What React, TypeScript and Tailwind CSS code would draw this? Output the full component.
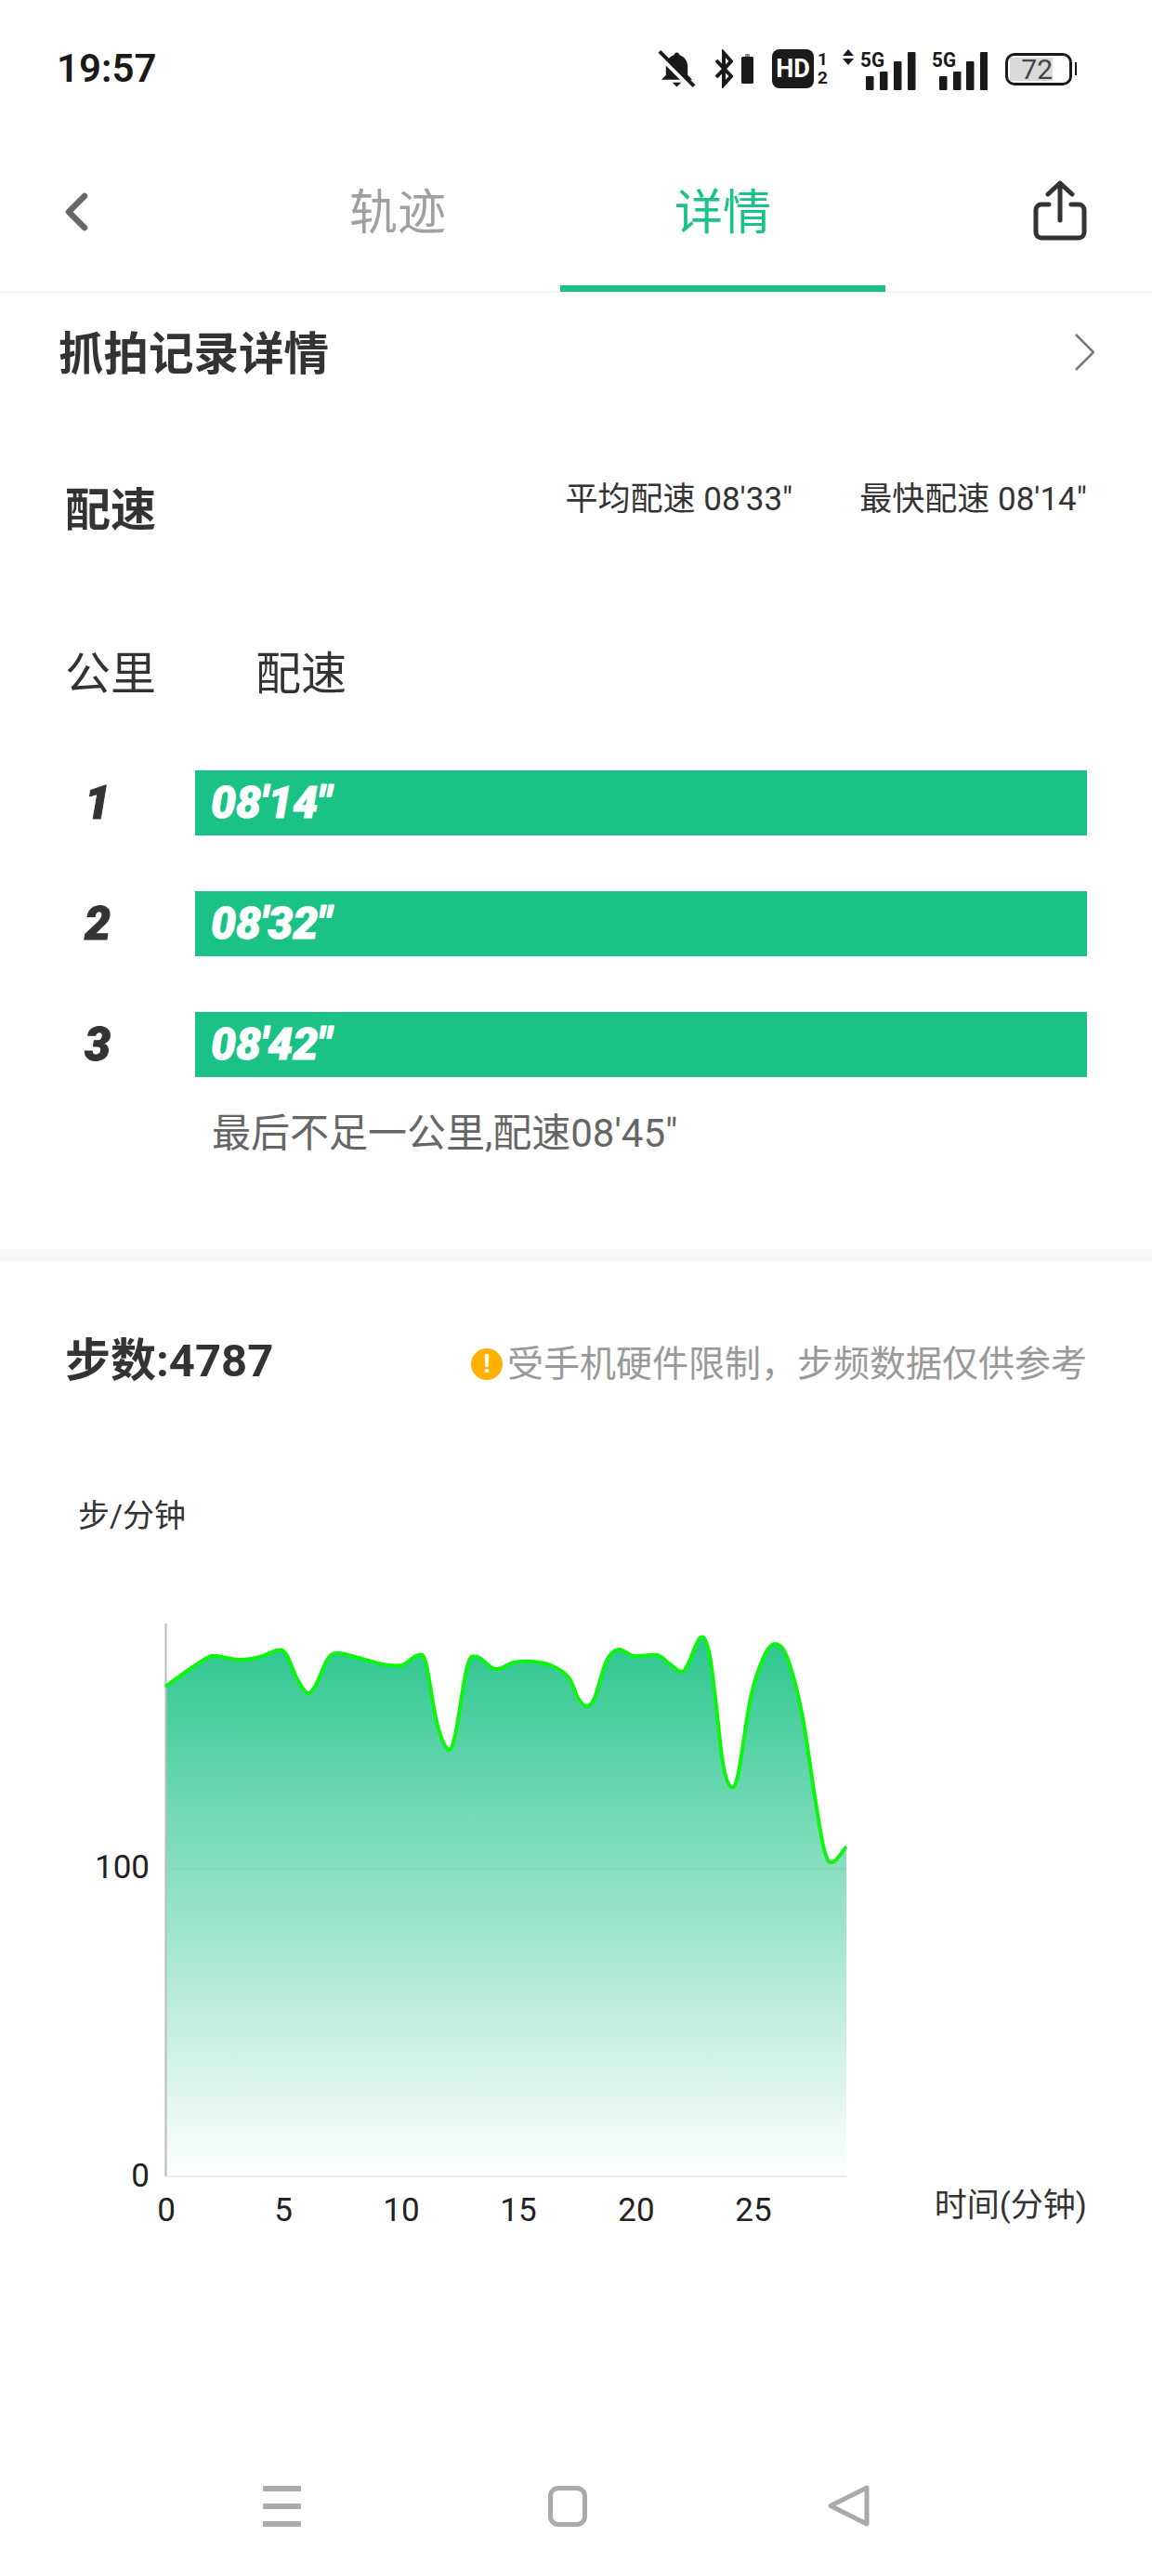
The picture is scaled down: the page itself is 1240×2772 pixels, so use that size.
import React from "react";

const pts: [number, number][] = [
  [178,1815],[203,1797],[223,1784],[233,1782],[257,1786],[280,1783],[298,1776],[308,1780],[320,1807],[331,1822],[340,1813],[353,1785],[365,1779],[393,1786],[413,1791],[433,1792],[448,1782],[458,1788],[470,1853],[482,1882],[490,1867],[503,1793],[514,1783],[533,1796],[553,1789],[573,1788],[593,1792],[612,1805],[622,1827],[631,1836],[640,1827],[653,1787],[666,1775],[682,1782],[707,1781],[720,1790],[733,1799],[740,1792],[754,1762],[763,1777],[770,1827],[778,1897],[787,1923],[795,1907],[808,1827],[822,1783],[834,1769],[847,1783],[863,1843],[877,1933],[887,1990],[896,2004],[911,1987],
];

function smooth(p: [number, number][]) {
  let d = `M${p[0][0]} ${p[0][1]}`;
  for (let i = 0; i < p.length - 1; i++) {
    const a = p[Math.max(i - 1, 0)];
    const b = p[i];
    const c = p[i + 1];
    const e = p[Math.min(i + 2, p.length - 1)];
    const c1x = b[0] + (c[0] - a[0]) / 6;
    const c1y = b[1] + (c[1] - a[1]) / 6;
    const c2x = c[0] - (e[0] - b[0]) / 6;
    const c2y = c[1] - (e[1] - b[1]) / 6;
    d += `C${c1x} ${c1y} ${c2x} ${c2y} ${c[0]} ${c[1]}`;
  }
  return d;
}

const line = smooth(pts);

function Cell({ bars }: { bars: number[] }) {
  const hs = [15, 20, 31, 41];
  return (
    <div className="h-[42px]">
      <svg width="60" height="48" viewBox="0 -6 60 48" className="block mt-[-6px]">
        {bars.map((x, i) => (
          <rect key={x} x={x} y={41 - hs[i]} width="8.5" height={hs[i]} rx="1" fill="#1a1a1a" />
        ))}
        <text x="0" y="16" textLength="26" lengthAdjust="spacingAndGlyphs" className="fill-[#1a1a1a] text-[22px] font-bold">5G</text>
      </svg>
    </div>
  );
}

function PaceRow({ n, pace }: { n: string; pace: string }) {
  return (
    <div className="flex items-center h-[70px]">
      <div className="w-[210px] text-center text-[50px] leading-[70px] font-black italic text-[#333] [-webkit-text-stroke:1px_#333]">{n}</div>
      <div className="flex-1 h-[70px] bg-[#1ac285] pl-[17px] text-[48px] leading-[70px] font-black italic text-white [-webkit-text-stroke:1px_#fff]">{pace}</div>
    </div>
  );
}

export default function App() {
  return (
    <div className="w-[1240px] h-[2772px] bg-white overflow-hidden font-['Roboto','Noto_Sans_CJK_SC',sans-serif]">
      {/* status bar */}
      <div className="h-[148px] flex items-center pl-[61px] pr-[81px]">
        <div className="text-[42px] leading-[50px] font-semibold text-[#1a1a1a]">19:57</div>
        <div className="ml-auto flex items-center">
          <svg width="41" height="42" viewBox="0 0 42 42" className="block">
            <path d="M21 3c2 0 3 2 3 3 6 2 9 7 9 13v9l5 5H4l5-5v-9c0-6 3-11 9-13 0-1 1-3 3-3z" fill="#1a1a1a" />
            <path d="M16 36h10l-5 5z" fill="#1a1a1a" />
            <path d="M-2 3 38 43" stroke="#fff" strokeWidth="5" />
            <path d="M2 2 40 40" stroke="#1a1a1a" strokeWidth="4" />
          </svg>
          <svg width="20" height="42" viewBox="0 0 20 42" className="block ml-[20px]">
            <path d="M2 12 18 29 10 38V4l8 9L2 30" fill="none" stroke="#1a1a1a" strokeWidth="4" />
          </svg>
          <svg width="13" height="32" viewBox="0 0 13 32" className="block ml-[9px]">
            <rect x="4" y="0" width="5" height="4" fill="#888" />
            <rect x="0" y="3" width="13" height="29" rx="1.5" fill="#1a1a1a" />
          </svg>
          <div className="ml-[20px] w-[45px] h-[42px] rounded-[8px] bg-[#1a1a1a] flex items-center justify-center text-white text-[27px] leading-[42px] font-bold">HD</div>
          <div className="ml-[4px] w-[11px] flex flex-col items-center text-[#1a1a1a] text-[19px] leading-[20px] font-bold">
            <span>1</span>
            <span>2</span>
          </div>
          <svg width="12" height="17" viewBox="0 0 12 17" className="block ml-[16px] mb-[25px]">
            <path d="M6 0 12 7H0zM6 17 0 10h12z" fill="#1a1a1a" />
          </svg>
          <div className="ml-[7px]"><Cell bars={[6, 21, 36, 51]} /></div>
          <div className="ml-[17px]"><Cell bars={[8, 23, 37, 52]} /></div>
          <div className="ml-[19px] flex items-center">
            <div className="w-[72px] h-[35px] border-[3px] border-[#1a1a1a] rounded-[10px] pl-[2px] py-[2px]">
              <div className="w-[46px] h-[25px] bg-[#d9d9d9] flex justify-end text-[30px] leading-[25px] text-[#444]">72</div>
            </div>
            <div className="ml-[3px] w-[2px] h-[14px] bg-[#1a1a1a]"></div>
          </div>
        </div>
      </div>

      {/* header */}
      <div className="h-[167px] border-b border-[#eeeeee] flex">
        <div className="w-[253px] h-[159px] pl-[70px] flex items-center">
          <svg width="25" height="42" viewBox="0 0 25 42" className="block">
            <path d="M21 4 4 21l17 17" fill="none" stroke="#666" strokeWidth="6.5" strokeLinecap="round" strokeLinejoin="round" />
          </svg>
        </div>
        <div className="w-[350px] h-[166px] pt-[5px] pb-[7px] flex items-center justify-center text-[52px] text-[#a0a0a0]">轨迹</div>
        <div className="w-[350px] h-[166px] pt-[5px] border-b-[7px] border-[#1ac285] flex items-center justify-center text-[52px] text-[#1ac285]">详情</div>
        <div className="flex-1 h-[157px] pr-[70px] flex items-center justify-end">
          <svg width="58" height="65" viewBox="0 0 58 65" className="block">
            <path d="M29 43V3M16 15 29 3l13 12" fill="none" stroke="#333" strokeWidth="5" strokeLinecap="round" strokeLinejoin="round" />
            <path d="M17 26H9a6 6 0 0 0-6 6v24a6 6 0 0 0 6 6h40a6 6 0 0 0 6-6V32a6 6 0 0 0-6-6h-8" fill="none" stroke="#333" strokeWidth="5" strokeLinecap="round" />
          </svg>
        </div>
      </div>

      {/* capture record */}
      <div className="h-[132px] pl-[63px] pr-[62px] flex items-center justify-between">
        <div className="mt-[2px] text-[48.5px] leading-[60px] font-bold text-[#333]">抓拍记录详情</div>
        <svg width="21" height="40" viewBox="0 0 21 40" className="block mb-[5px]">
          <path d="M1 1 20 20 1 39" fill="none" stroke="#777" strokeWidth="2.5" />
        </svg>
      </div>

      {/* pace */}
      <div className="mt-[67px] pl-[70px] pr-[70px] flex items-start justify-between">
        <div className="mt-[6px] text-[49px] leading-[60px] font-bold text-[#333]">配速</div>
        <div className="flex gap-[72px] text-[35px] leading-[48px] text-[#333]">
          <span>平均配速 08'33"</span>
          <span>最快配速 08'14"</span>
        </div>
      </div>
      <div className="mt-[116px] pl-[70px] flex gap-[107px] text-[49px] leading-[60px] text-[#333]">
        <span>公里</span>
        <span>配速</span>
      </div>
      <div className="mt-[73px] pr-[70px] flex flex-col gap-[60px]">
        <PaceRow n="1" pace={`08'14"`} />
        <PaceRow n="2" pace={`08'32"`} />
        <PaceRow n="3" pace={`08'42"`} />
      </div>
      <div className="mt-[36px] pl-[228px] text-[42px] leading-[50px] text-[#666]">最后不足一公里,配速08'45"</div>
      <div className="mt-[99px] h-[14px] bg-[#f7f7f7]"></div>

      {/* steps */}
      <div className="mt-[77px] pl-[70px] pr-[70px] flex items-center justify-between">
        <div className="text-[49px] leading-[60px] font-bold text-[#333]">步数:4787</div>
        <div className="mt-[6px] flex items-center text-[39px] leading-[54px] text-[#999]">
          <div className="w-[34px] h-[34px] mr-[5px] rounded-full bg-[#ffb000] flex items-center justify-center text-white text-[28px] leading-[34px] font-bold">!</div>
          <span>受手机硬件限制，步频数据仅供参考</span>
        </div>
      </div>
      <div className="mt-[114px] pl-[84px] text-[34px] leading-[44px] text-[#333]">步/分钟</div>

      {/* chart */}
      <svg width="1240" height="680" viewBox="0 1720 1240 680" className="block mt-[67px]">
        <defs>
          <linearGradient id="area" gradientUnits="userSpaceOnUse" x1="0" y1="1762" x2="0" y2="2342">
            <stop offset="0" stopColor="#1ac285" stopOpacity="0.92" />
            <stop offset="1" stopColor="#1ac285" stopOpacity="0" />
          </linearGradient>
        </defs>
        <path d="M178 2342H911" stroke="#eeeeee" strokeWidth="2" />
        <path d={`${line}L911 2342L178 2342Z`} fill="url(#area)" />
        <path d="M178 2011H911" stroke="#000" strokeOpacity="0.03" strokeWidth="1.5" />
        <path d="M178.5 1747V2342" stroke="#bbbbbb" strokeWidth="2" />
        <path d={line} fill="none" stroke="#0df50d" strokeWidth="4" />
        <g className="text-[35px] fill-[#222]">
          <text x="161" y="2021" textAnchor="end">100</text>
          <text x="161" y="2353" textAnchor="end">0</text>
          <text x="179" y="2390" textAnchor="middle">0</text>
          <text x="305" y="2390" textAnchor="middle">5</text>
          <text x="432" y="2390" textAnchor="middle">10</text>
          <text x="558" y="2390" textAnchor="middle">15</text>
          <text x="685" y="2390" textAnchor="middle">20</text>
          <text x="811" y="2390" textAnchor="middle">25</text>
        </g>
        <text x="1170" y="2385" textAnchor="end" className="text-[35px] fill-[#333]">时间(分钟)</text>
      </svg>

      {/* nav bar */}
      <div className="mt-[273px] pl-[283px] flex items-center">
        <div className="w-[41px] flex flex-col gap-[13px]">
          <div className="h-[6px] rounded-[1px] bg-[#aaaaaa]"></div>
          <div className="h-[6px] rounded-[1px] bg-[#aaaaaa]"></div>
          <div className="h-[6px] rounded-[1px] bg-[#aaaaaa]"></div>
        </div>
        <div className="ml-[266px] w-[42px] h-[44px] border-[5px] border-[#aaaaaa] rounded-[11px]"></div>
        <svg width="46" height="47" viewBox="0 0 46 47" className="block ml-[259px]">
          <path d="M42 4 3 23.5 42 43Z" fill="none" stroke="#aaaaaa" strokeWidth="5" strokeLinejoin="round" />
        </svg>
      </div>
    </div>
  );
}
